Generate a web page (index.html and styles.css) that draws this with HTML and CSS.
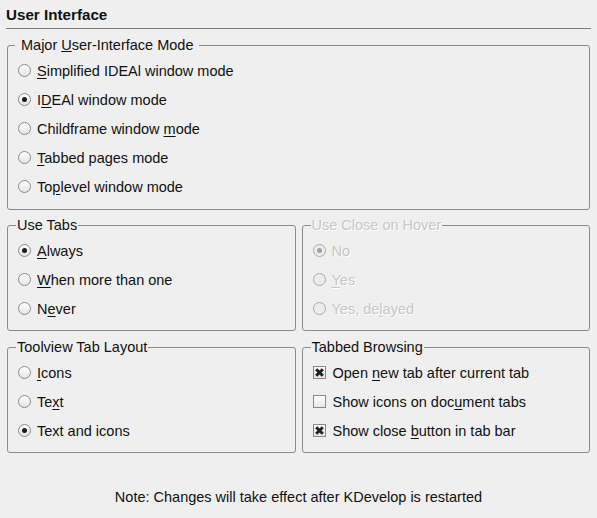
FILE: index.html
```html
<!DOCTYPE html>
<html>
<head>
<meta charset="utf-8">
<link rel="stylesheet" href="styles.css">
</head>
<body>
<div class="page">
  <div class="title">User Interface</div>
  <div class="sep"></div>

  <fieldset class="group major">
    <legend>Major <u>U</u>ser-Interface Mode</legend>
    <div class="opt"><span class="radio"></span><span><u>S</u>implified IDEAl window mode</span></div>
    <div class="opt"><span class="radio on"></span><span>I<u>D</u>EAl window mode</span></div>
    <div class="opt"><span class="radio"></span><span>Childframe window <u>m</u>ode</span></div>
    <div class="opt"><span class="radio"></span><span><u>T</u>abbed pages mode</span></div>
    <div class="opt"><span class="radio"></span><span>To<u>p</u>level window mode</span></div>
  </fieldset>

  <div class="cols first">
    <fieldset class="group">
      <legend>Use Tabs</legend>
      <div class="opt"><span class="radio on"></span><span><u>A</u>lways</span></div>
      <div class="opt"><span class="radio"></span><span><u>W</u>hen more than one</span></div>
      <div class="opt"><span class="radio"></span><span>N<u>e</u>ver</span></div>
    </fieldset>
    <fieldset class="group disabled">
      <legend>Use Close on Hover</legend>
      <div class="opt"><span class="radio on"></span><span>No</span></div>
      <div class="opt"><span class="radio"></span><span><u>Y</u>es</span></div>
      <div class="opt"><span class="radio"></span><span>Yes, de<u>l</u>ayed</span></div>
    </fieldset>
  </div>

  <div class="cols">
    <fieldset class="group">
      <legend>Toolview Tab Layout</legend>
      <div class="opt"><span class="radio"></span><span><u>I</u>cons</span></div>
      <div class="opt"><span class="radio"></span><span>Te<u>x</u>t</span></div>
      <div class="opt"><span class="radio on"></span><span>Text and icons</span></div>
    </fieldset>
    <fieldset class="group">
      <legend>Tabbed Browsing</legend>
      <div class="opt"><span class="check on"></span><span>Open <u>n</u>ew tab after current tab</span></div>
      <div class="opt"><span class="check"></span><span>Show icons on doc<u>u</u>ment tabs</span></div>
      <div class="opt"><span class="check on"></span><span>Show close <u>b</u>utton in tab bar</span></div>
    </fieldset>
  </div>

  <div class="note">Note: Changes will take effect after KDevelop is restarted</div>
</div>
</body>
</html>
```

FILE: styles.css
```css
html, body {
  margin: 0;
  padding: 0;
  background: #efefef;
}
body {
  font-family: "Liberation Sans", Arial, sans-serif;
  font-size: 14.5px;
  color: #111;
}
.page {
  width: 597px;
  height: 518px;
  box-sizing: border-box;
  padding: 6px 7px 0 7px;
  display: flex;
  flex-direction: column;
}
.title {
  font-weight: bold;
  font-size: 15.2px;
  line-height: 17px;
  margin-left: -1px;
}
.sep {
  height: 1px;
  background: #7c7c7c;
  margin: 5px -1px 8px -1px;
}
.group {
  margin: 0;
  border: 1px solid #8b8b8b;
  border-radius: 3px;
  padding: 3px 10px 7px 10px;
  min-width: 0;
}
.group legend {
  line-height: 16px;
  padding: 0 1px 0 1px;
  margin-left: -2px;
}
.group.major legend {
  padding: 0 6px 0 6px;
  margin-left: -3px;
}
.major {
  padding-bottom: 8px;
}
.cols {
  display: flex;
  gap: 6px;
  margin-top: 8px;
}
.cols.first {
  margin-top: 7px;
}
.cols .group {
  flex: 1 1 0;
}
.opt {
  height: 29px;
  display: flex;
  align-items: center;
  gap: 6px;
  white-space: nowrap;
}
.opt u {
  text-underline-offset: 2px;
}
.radio {
  width: 11px;
  height: 11px;
  border: 1px solid #8a8a8a;
  border-radius: 50%;
  background: linear-gradient(#ffffff, #e4e4e4);
  position: relative;
  flex: none;
}
.radio.on::after {
  content: "";
  position: absolute;
  left: 3px;
  top: 3px;
  width: 5px;
  height: 5px;
  border-radius: 50%;
  background: #1c1c1c;
}
.check {
  width: 11px;
  height: 11px;
  border: 1px solid #8a8a8a;
  background: linear-gradient(#ffffff, #e6e6e6);
  position: relative;
  flex: none;
  margin-right: 1px;
}
.check.on::before,
.check.on::after {
  content: "";
  position: absolute;
  left: 0px;
  top: 4px;
  width: 11px;
  height: 3px;
  background: #222;
  transform: rotate(45deg) scaleX(0.85);
}
.check.on::after {
  transform: rotate(-45deg) scaleX(0.85);
}
.disabled {
  color: #c6c6c6;
  text-shadow: 1px 1px 0 #ffffff;
}
.disabled .radio {
  border-color: #a9a9a9;
  background: #ececec;
}
.disabled .radio.on::after {
  background: #a0a0a0;
}
.note {
  text-align: center;
  margin-top: 36px;
  line-height: 16px;
}
```
